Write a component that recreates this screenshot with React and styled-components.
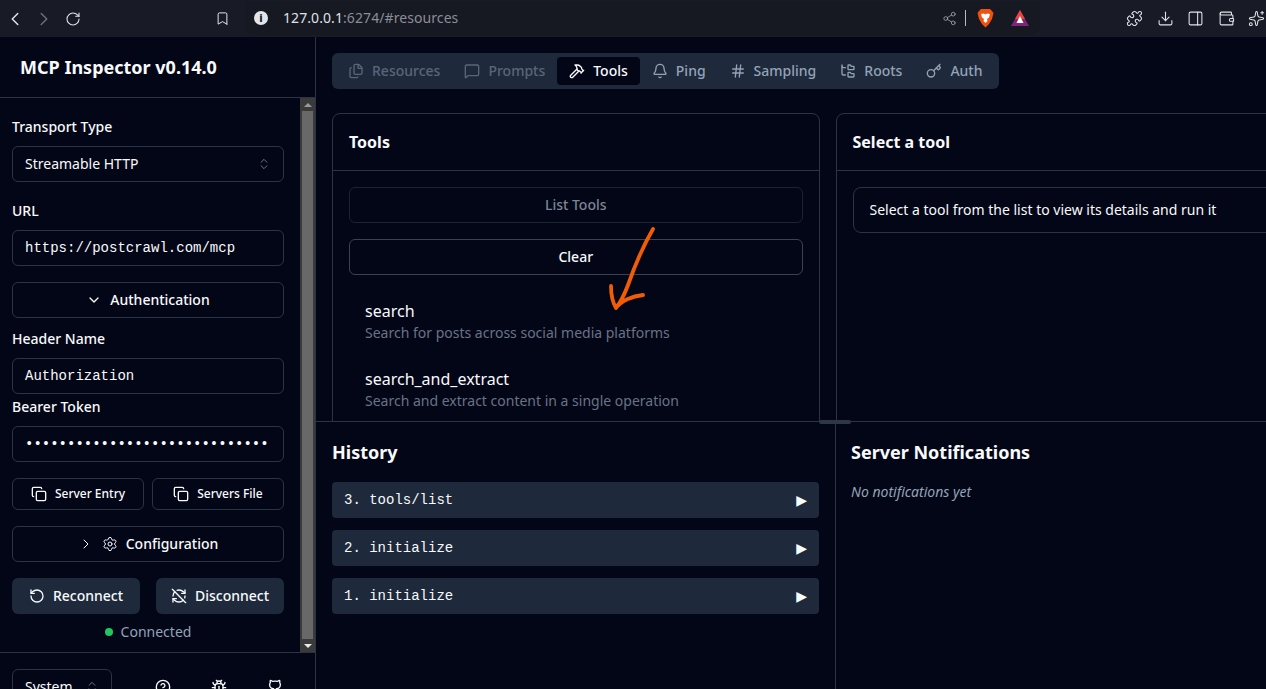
import React from 'react';
import styled, { createGlobalStyle } from 'styled-components';
import {
  Bell, Bookmark, Bug, ChevronDown, ChevronLeft, ChevronRight, ChevronsUpDown, CircleHelp, Copy,
  Download, Files, FolderTree, Github, Hammer, Hash, Key, MessageSquare, PanelRight, Puzzle,
  RefreshCwOff, RotateCcw, RotateCw, Settings, Share2, Sparkles, Wallet,
} from 'lucide-react';

const GlobalStyle = createGlobalStyle`
  html, body {
    margin: 0;
    height: 100%;
    overflow: hidden;
    background: #020617;
    color: #f8fafc;
    font-family: "Noto Sans", sans-serif;
    font-size: 14px;
    line-height: 20px;
  }
  * { box-sizing: border-box; }
`;

export default function App() {
  return (
    <Page>
      <GlobalStyle />
      <ChromeBar>
        <NavButton><ChevronLeft size={22} strokeWidth={1.6} /></NavButton>
        <NavButton $dim><ChevronRight size={22} strokeWidth={1.6} /></NavButton>
        <NavButton><RotateCw size={16} strokeWidth={1.6} /></NavButton>
        <BookmarkSlot><Bookmark size={15} strokeWidth={1.6} /></BookmarkSlot>
        <UrlPill>
          <InfoDot>i</InfoDot>
          <UrlText>127.0.0.1<UrlRest>:6274/#resources</UrlRest></UrlText>
          <UrlEnd>
            <Share2 size={15} strokeWidth={1.3} color="#a3a6ad" />
            <UrlDivider />
            <BraveLogo />
            <BatLogo />
          </UrlEnd>
        </UrlPill>
        <ChromeIcons>
          <Puzzle size={17} strokeWidth={1.5} />
          <Download size={17} strokeWidth={1.5} />
          <PanelRight size={17} strokeWidth={1.5} />
          <Wallet size={17} strokeWidth={1.5} />
          <Sparkles size={17} strokeWidth={1.5} />
        </ChromeIcons>
      </ChromeBar>

      <Body>
        <Sidebar>
          <SidebarHead>MCP Inspector v0.14.0</SidebarHead>
          <SidebarMiddle>
            <Form>
              <Label $top={0}>Transport Type</Label>
              <Control $top={9} $between>
                Streamable HTTP
                <ChevronsUpDown size={14} strokeWidth={1.5} color="#7b8494" />
              </Control>
              <Label $top={19}>URL</Label>
              <Control $top={9} $mono>https://postcrawl.com/mcp</Control>
              <WideButton $top={16}><ChevronDown size={16} />Authentication</WideButton>
              <Label $top={11}>Header Name</Label>
              <Control $top={9} $mono>Authorization</Control>
              <Label $top={3}>Bearer Token</Label>
              <Control $top={9} $mono>{'•'.repeat(29)}</Control>
              <ButtonRow $top={16} $gap={8}>
                <SmallButton><Copy size={16} />Server Entry</SmallButton>
                <SmallButton><Copy size={16} />Servers File</SmallButton>
              </ButtonRow>
              <WideButton $top={16}>
                <ChevronRight size={16} strokeWidth={1.5} />
                <Settings size={16} strokeWidth={1.5} />
                Configuration
              </WideButton>
              <ButtonRow $top={16} $gap={16}>
                <SolidButton><RotateCcw size={16} />Reconnect</SolidButton>
                <SolidButton><RefreshCwOff size={16} />Disconnect</SolidButton>
              </ButtonRow>
              <Status><StatusDot />Connected</Status>
            </Form>
            <Scrollbar>
              <ScrollArrow />
              <ScrollThumb />
              <ScrollArrow $down />
            </Scrollbar>
          </SidebarMiddle>
          <SidebarFoot>
            <ThemeSelect>System<ChevronsUpDown size={14} strokeWidth={1.5} color="#7b8494" /></ThemeSelect>
            <FootIcons>
              <CircleHelp size={16} />
              <Bug size={16} />
              <Github size={16} />
            </FootIcons>
          </SidebarFoot>
        </Sidebar>

        <Main>
          <TopPane>
            <Tabs>
              <Tab $disabled><Files size={16} />Resources</Tab>
              <Tab $disabled><MessageSquare size={16} />Prompts</Tab>
              <Tab $active><Hammer size={16} />Tools</Tab>
              <Tab><Bell size={16} />Ping</Tab>
              <Tab><Hash size={16} />Sampling</Tab>
              <Tab><FolderTree size={16} />Roots</Tab>
              <Tab><Key size={16} />Auth</Tab>
            </Tabs>
            <Cards>
              <Card>
                <CardHead>Tools</CardHead>
                <CardBody>
                  <OutlineButton $disabled>List Tools</OutlineButton>
                  <OutlineButton $strong>Clear</OutlineButton>
                  <ToolItem>
                    <ToolName>search</ToolName>
                    <ToolDesc>Search for posts across social media platforms</ToolDesc>
                  </ToolItem>
                  <ToolItem>
                    <ToolName>search_and_extract</ToolName>
                    <ToolDesc>Search and extract content in a single operation</ToolDesc>
                  </ToolItem>
                </CardBody>
              </Card>
              <Card>
                <CardHead>Select a tool</CardHead>
                <CardBody>
                  <Notice>Select a tool from the list to view its details and run it</Notice>
                </CardBody>
              </Card>
            </Cards>
            <Arrow viewBox="0 0 50 90" width="50" height="90">
              <path
                d="M45 4 C38 16 27 40 20 60 C17 68 12 78 8 83 M3 61 C3 70 5 78 8 83 C13 76 24 71 35 70"
                fill="none"
                stroke="#f25c05"
                strokeWidth="3.8"
                strokeLinecap="round"
                strokeLinejoin="round"
              />
            </Arrow>
          </TopPane>
          <BottomPane>
            <ResizeHandle />
            <HistoryPane>
              <PaneTitle>History</PaneTitle>
              <HistoryList>
                {['3. tools/list', '2. initialize', '1. initialize'].map((entry) => (
                  <HistoryRow key={entry}>
                    {entry}
                    <Caret>▶</Caret>
                  </HistoryRow>
                ))}
              </HistoryList>
            </HistoryPane>
            <NotifyPane>
              <PaneTitle>Server Notifications</PaneTitle>
              <EmptyNote>No notifications yet</EmptyNote>
            </NotifyPane>
          </BottomPane>
        </Main>
      </Body>
    </Page>
  );
}

function BraveLogo() {
  return (
    <svg width="17" height="20" viewBox="0 0 17 20" style={{ marginLeft: 11 }}>
      <path d="M4 1 L13 1 L15 3 L16.5 5 L15 11 L12 16 L8.5 19.5 L5 16 L2 11 L.5 5 L2 3 Z" fill="#f1500f" />
      <path d="M4 6 L7 5.5 L8.5 6.5 L10 5.5 L13 6 L12 9.5 L10 11 L10.5 13 L8.5 15 L6.5 13 L7 11 L5 9.5 Z" fill="#fff" />
    </svg>
  );
}

function BatLogo() {
  return (
    <svg width="18" height="16" viewBox="0 0 18 16" style={{ marginLeft: 17 }}>
      <path d="M9 0 L18 16 L0 16 Z" fill="#80247b" />
      <path d="M9 0 L14 9 L4 9 Z" fill="#e8453c" />
      <path d="M9 6 L12.5 13 L5.5 13 Z" fill="#fff" />
    </svg>
  );
}

const Page = styled.div`
  display: flex;
  flex-direction: column;
  width: 1266px;
  height: 689px;
  overflow: hidden;
`;

const ChromeBar = styled.div`
  display: flex;
  align-items: center;
  flex: none;
  height: 37px;
  background: #181a25;
  color: #e4e5e9;
`;

const NavButton = styled.div`
  display: flex;
  align-items: center;
  justify-content: center;
  flex: none;
  width: 29px;
  color: ${(p) => (p.$dim ? '#6d7079' : '#e4e5e9')};
`;

const BookmarkSlot = styled.div`
  display: flex;
  justify-content: center;
  flex: none;
  width: 30px;
  margin-left: 120px;
  margin-right: 8px;
`;

const UrlPill = styled.div`
  display: flex;
  align-items: center;
  flex: none;
  width: 795px;
  height: 34px;
  margin-top: -1px;
  padding-left: 9px;
  background: #161822;
  border-radius: 0 0 10px 10px;
`;

const InfoDot = styled.span`
  display: flex;
  align-items: center;
  justify-content: center;
  width: 14px;
  height: 14px;
  border-radius: 50%;
  background: #e4e5e9;
  color: #161822;
  font-size: 11px;
  font-weight: 800;
`;

const UrlText = styled.span`
  margin-left: 15px;
  font-size: 14px;
  color: #dfe1e6;
  letter-spacing: 0.08px;
`;

const UrlRest = styled.span`
  color: #8b8e96;
`;

const UrlEnd = styled.div`
  display: flex;
  align-items: center;
  margin-left: auto;
  margin-right: 11px;
`;

const UrlDivider = styled.span`
  width: 1px;
  height: 16px;
  margin-left: 8px;
  background: #b9bbc1;
`;

const ChromeIcons = styled.div`
  display: flex;
  align-items: center;
  gap: 13.5px;
  margin-left: 86px;
  flex: none;
`;

const Body = styled.div`
  display: flex;
  flex: 1;
  min-height: 0;
`;

const Sidebar = styled.aside`
  display: flex;
  flex-direction: column;
  flex: none;
  width: 316px;
  border-right: 1px solid #2b3443;
`;

const SidebarHead = styled.div`
  display: flex;
  align-items: center;
  flex: none;
  height: 61px;
  padding-left: 20px;
  font-size: 18px;
  font-weight: 700;
  border-bottom: 1px solid #2b3443;
`;

const SidebarMiddle = styled.div`
  display: flex;
  flex: 1;
  min-height: 0;
`;

const Form = styled.div`
  display: flex;
  flex-direction: column;
  flex: 1;
  padding: 19px 16px 0 12px;
`;

const Label = styled.div`
  height: 20px;
  margin-top: ${(p) => p.$top}px;
  font-weight: 500;
`;

const Control = styled.div`
  display: flex;
  align-items: center;
  justify-content: ${(p) => (p.$between ? 'space-between' : 'flex-start')};
  flex: none;
  height: 36px;
  margin-top: ${(p) => p.$top}px;
  padding: 0 12px;
  border: 1px solid #2b3443;
  border-radius: 6px;
  white-space: nowrap;
  overflow: hidden;
  font-family: ${(p) => (p.$mono ? '"Liberation Mono", monospace' : 'inherit')};
  font-size: 14px;
`;

const WideButton = styled.div`
  display: flex;
  align-items: center;
  justify-content: center;
  gap: 8px;
  flex: none;
  height: 36px;
  margin-top: ${(p) => p.$top}px;
  border: 1px solid #2b3443;
  border-radius: 6px;
  font-weight: 500;
`;

const ButtonRow = styled.div`
  display: flex;
  gap: ${(p) => p.$gap}px;
  flex: none;
  margin-top: ${(p) => p.$top}px;
`;

const SmallButton = styled.div`
  display: flex;
  align-items: center;
  justify-content: center;
  gap: 8px;
  flex: 1;
  height: 32px;
  border: 1px solid #2b3443;
  border-radius: 6px;
  font-size: 12px;
  font-weight: 500;
`;

const SolidButton = styled.div`
  display: flex;
  align-items: center;
  justify-content: center;
  gap: 8px;
  flex: 1;
  height: 36px;
  border-radius: 6px;
  background: #1e293b;
  font-weight: 500;
`;

const Status = styled.div`
  display: flex;
  align-items: center;
  justify-content: center;
  gap: 8px;
  height: 20px;
  margin-top: 8px;
  color: #94a3b8;
`;

const StatusDot = styled.span`
  width: 8px;
  height: 8px;
  border-radius: 50%;
  background: #22c55e;
`;

const Scrollbar = styled.div`
  display: flex;
  flex-direction: column;
  flex: none;
  width: 15px;
  background: #3a3a3a;
`;

const ScrollArrow = styled.div`
  flex: none;
  height: 13px;
  display: flex;
  align-items: center;
  justify-content: center;
  &::after {
    content: '';
    border-left: 4px solid transparent;
    border-right: 4px solid transparent;
    ${(p) => (p.$down ? 'border-top: 4px solid #e8e8e8;' : 'border-bottom: 4px solid #9a9a9a;')}
  }
`;

const ScrollThumb = styled.div`
  flex: 1;
  margin: 0 2px;
  background: #686868;
`;

const SidebarFoot = styled.div`
  display: flex;
  flex: none;
  height: 37px;
  padding: 16px 12px 0;
  border-top: 1px solid #2b3443;
  overflow: hidden;
`;

const ThemeSelect = styled.div`
  display: flex;
  align-items: center;
  justify-content: space-between;
  flex: none;
  width: 100px;
  height: 36px;
  padding: 0 12px;
  border: 1px solid #2b3443;
  border-radius: 6px;
`;

const FootIcons = styled.div`
  display: flex;
  gap: 40px;
  margin-left: 43px;
  padding-top: 10px;
`;

const Main = styled.main`
  display: flex;
  flex-direction: column;
  flex: 1;
  min-width: 0;
`;

const TopPane = styled.section`
  position: relative;
  flex: none;
  height: 385px;
  padding: 16px 0 0 16px;
  overflow: hidden;
  border-bottom: 1px solid #2b3443;
`;

const Tabs = styled.div`
  display: inline-flex;
  align-items: center;
  height: 36px;
  padding: 4px;
  border-radius: 6px;
  background: #1e293b;
`;

const Tab = styled.div`
  display: flex;
  align-items: center;
  gap: 8px;
  height: 28px;
  padding: 0 12px;
  border-radius: 4px;
  font-weight: 500;
  color: ${(p) => (p.$active ? '#f8fafc' : '#94a3b8')};
  background: ${(p) => (p.$active ? '#020617' : 'transparent')};
  opacity: ${(p) => (p.$disabled ? 0.5 : 1)};
`;

const Cards = styled.div`
  display: flex;
  gap: 16px;
  width: 1008px;
  margin-top: 24px;
`;

const Card = styled.div`
  flex: none;
  width: 487.5px;
  height: 400px;
  border: 1px solid #2b3443;
  border-radius: 8px;
`;

const CardHead = styled.div`
  display: flex;
  align-items: center;
  height: 57px;
  padding-left: 16px;
  font-size: 16px;
  font-weight: 700;
  border-bottom: 1px solid #2b3443;
`;

const CardBody = styled.div`
  display: flex;
  flex-direction: column;
  gap: 16px;
  padding: 16px;
`;

const OutlineButton = styled.div`
  display: flex;
  align-items: center;
  justify-content: center;
  height: 36px;
  border: 1px solid #2b3443;
  border-radius: 6px;
  font-weight: 500;
  color: ${(p) => (p.$disabled ? '#7d8594' : '#f8fafc')};
  border-color: ${(p) => (p.$disabled ? '#1b2331' : p.$strong ? '#3a4352' : '#2b3443')};
`;

const ToolItem = styled.div`
  display: flex;
  flex-direction: column;
  height: 52px;
  padding: 8px 16px 0;
`;

const ToolName = styled.span`
  height: 24px;
  line-height: 24px;
  font-size: 16px;
`;

const ToolDesc = styled.span`
  height: 20px;
  color: #697386;
`;

const Notice = styled.div`
  display: flex;
  align-items: center;
  height: 46px;
  padding-left: 16px;
  border: 1px solid #2b3443;
  border-radius: 8px;
  white-space: nowrap;
`;

const Arrow = styled.svg`
  position: absolute;
  left: 292px;
  top: 188px;
`;

const BottomPane = styled.section`
  position: relative;
  display: flex;
  flex: 1;
  min-height: 0;
`;

const ResizeHandle = styled.div`
  position: absolute;
  top: -2px;
  left: 503px;
  width: 32px;
  height: 4px;
  border-radius: 2px;
  background: #2e3747;
`;

const HistoryPane = styled.div`
  flex: none;
  width: 520px;
  padding: 16px 16px 0;
  border-right: 1px solid #2b3443;
`;

const NotifyPane = styled.div`
  flex: 1;
  padding: 16px 15px 0;
`;

const PaneTitle = styled.h2`
  margin: 0;
  height: 28px;
  line-height: 28px;
  font-size: 18px;
  font-weight: 700;
`;

const HistoryList = styled.div`
  display: flex;
  flex-direction: column;
  gap: 12px;
  margin-top: 16px;
`;

const HistoryRow = styled.div`
  display: flex;
  align-items: center;
  justify-content: space-between;
  height: 36px;
  padding: 0 12px;
  border-radius: 4px;
  background: #1e293b;
  font-family: "Liberation Mono", monospace;
  font-size: 14px;
`;

const Caret = styled.span`
  font-family: "DejaVu Sans", sans-serif;
  font-size: 14px;
`;

const EmptyNote = styled.p`
  margin: 16px 0 0;
  font-style: italic;
  color: #94a3b8;
`;
